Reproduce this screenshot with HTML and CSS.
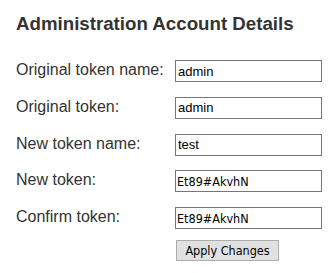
FILE: index.html
```html
<!DOCTYPE html>
<html>
<head>
<meta charset="utf-8">
<link rel="stylesheet" href="styles.css">
</head>
<body>
<div class="panel">
  <h1 class="title">Administration Account Details</h1>
  <form class="form">
    <label class="label">Original token name:</label>
    <input class="field" type="text" value="admin">
    <label class="label">Original token:</label>
    <input class="field" type="text" value="admin">
    <label class="label">New token name:</label>
    <input class="field" type="text" value="test">
    <label class="label">New token:</label>
    <input class="field token" type="text" value="Et89#AkvhN">
    <label class="label">Confirm token:</label>
    <input class="field token" type="text" value="Et89#AkvhN">
  </form>
  <div class="actions">
    <button class="btn" type="button">Apply Changes</button>
  </div>
</div>
</body>
</html>
```
FILE: styles.css
```css
html, body {
  margin: 0;
  padding: 0;
  background: #fff;
}
body {
  font-family: "Liberation Sans", Arial, sans-serif;
  color: #333;
}
.panel {
  padding: 13px 0 0 16px;
}
.title {
  margin: 0;
  font-size: 18.7px;
  line-height: 22px;
  font-weight: bold;
  color: #333;
}
.form {
  margin: 25px 0 0 0;
  display: grid;
  grid-template-columns: 159px 147px;
  row-gap: 14.75px;
  align-items: center;
}
.label {
  font-size: 16px;
  line-height: 18px;
  padding-bottom: 2px;
  color: #333;
}
.field {
  box-sizing: border-box;
  width: 147px;
  height: 22px;
  margin: 0;
  padding: 0 2px;
  border: 1px solid #767676;
  border-radius: 0;
  font-family: "Liberation Sans", Arial, sans-serif;
  font-size: 13px;
  color: #000;
  background: #fff;
  outline: none;
}
.field.token {
  padding: 0 1px;
  font-family: "DejaVu Sans Condensed", "DejaVu Sans", sans-serif;
  font-size: 12.5px;
}
.actions {
  margin-top: 11px;
  padding-left: 160px;
}
.btn {
  box-sizing: border-box;
  width: 103px;
  height: 21px;
  margin: 0;
  padding: 0;
  border: 1px solid #adadad;
  border-radius: 0;
  background: #e1e1e1;
  font-family: "DejaVu Sans Condensed", "DejaVu Sans", sans-serif;
  font-size: 12.5px;
  color: #000;
}
```
